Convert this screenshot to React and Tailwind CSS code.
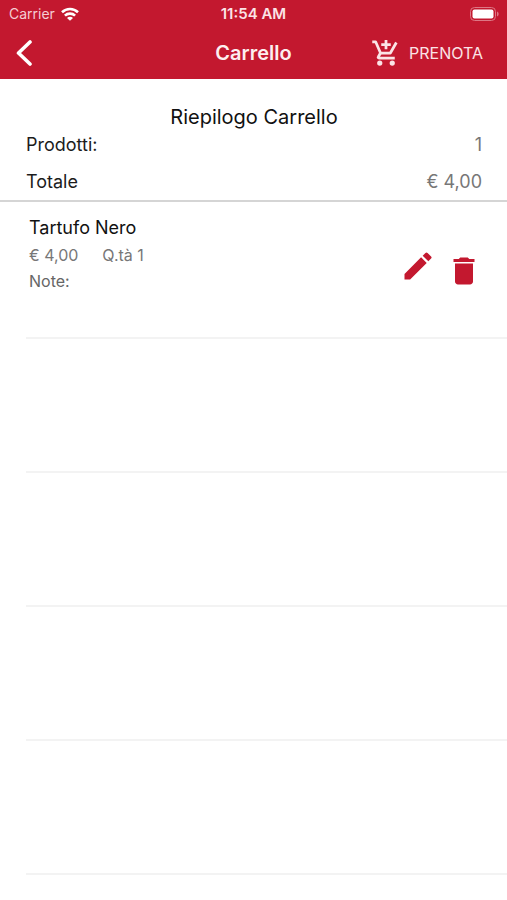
import { MdDelete, MdEdit } from "react-icons/md";

const items = [{ id: 1, name: "Tartufo Nero", price: "€ 4,00", quantity: 1, note: "" }];
const emptyRows = [1, 2, 3, 4];

function StatusBar() {
  return (
    <div className="grid h-7 grid-cols-3 items-center px-2 text-sm">
      <div className="flex items-center gap-[6px] pl-px">
        <span className="text-[#f5cdd3]">Carrier</span>
        <svg className="h-[14px] w-[18px]" viewBox="0 0 18 14" fill="none" stroke="white" strokeWidth="2.6" aria-hidden="true">
          <path d="M1 5.2C5.5.9 12.5.9 17 5.2" />
          <path d="M3.9 8.6C6.7 5.9 11.3 5.9 14.1 8.6" />
          <path d="M9 13.8 6 10.9C7.6 9.4 10.4 9.4 12 10.9Z" fill="white" stroke="none" />
        </svg>
      </div>
      <span className="text-center text-[15px] font-semibold text-[#fbe3e6]">11:54 AM</span>
      <svg className="h-[14px] w-[29px] justify-self-end" viewBox="0 0 29 14" aria-hidden="true">
        <rect x=".5" y=".5" width="25" height="13" rx="4" fill="none" stroke="#dd7785" />
        <rect x="2.5" y="2.5" width="21" height="9" rx="2" fill="white" />
        <path d="M27 4.5C29.2 5.5 29.2 8.5 27 9.5Z" fill="#dd7785" />
      </svg>
    </div>
  );
}

function CartPlusIcon() {
  return (
    <svg className="size-[30px]" viewBox="0 0 24 24" fill="none" stroke="currentColor" strokeWidth="2.2" aria-hidden="true">
      <path d="M12 1.500V9M8.200 5.200H15.800" />
      <path d="M1 3H3.700L7.600 12H15.500L20.300 3.600" strokeLinejoin="round" />
      <path d="M7.600 12 5.800 15.200C5.500 15.700 5.800 16 6.400 16H19" strokeLinejoin="round" />
      <circle cx="7" cy="20" r="2.100" fill="currentColor" stroke="none" />
      <circle cx="17" cy="20" r="2.100" fill="currentColor" stroke="none" />
    </svg>
  );
}

function Header() {
  return (
    <header className="h-[79px] bg-[#c3182f] text-white">
      <StatusBar />
      <div className="grid h-[50px] grid-cols-[1fr_auto_1fr] items-center px-4">
        <button type="button" aria-label="Indietro" className="h-12 w-12">
          <svg className="h-[26px] w-4" viewBox="0 0 16 26" fill="none" stroke="white" strokeWidth="3.6" strokeLinecap="round" strokeLinejoin="round" aria-hidden="true">
            <path d="M14 2 2.5 13 14 24" />
          </svg>
        </button>
        <h1 className="text-xl font-semibold text-[#fdeef0]">Carrello</h1>
        <button type="button" className="flex items-center gap-2 justify-self-end pr-2 text-base text-[#fbe3e6]">
          <CartPlusIcon />
          PRENOTA
        </button>
      </div>
    </header>
  );
}

function Summary() {
  return (
    <section className="border-b-2 border-[#d5d5d5] pt-6 pr-[25px] pb-1 pl-[26px] text-lg leading-7">
      <h2 className="text-center text-xl leading-7 text-[#111111]">Riepilogo Carrello</h2>
      <dl className="flex flex-col gap-[9px]">
        <div className="flex justify-between">
          <dt className="text-[#1c1c1c]">Prodotti:</dt>
          <dd className="text-[#777777]">1</dd>
        </div>
        <div className="flex justify-between">
          <dt className="text-[#1c1c1c]">Totale</dt>
          <dd className="text-[#777777]">€ 4,00</dd>
        </div>
      </dl>
    </section>
  );
}

function CartItem({ item }) {
  return (
    <li className="flex h-[137px] justify-between border-b-2 border-[#f3f3f3] pt-3 pr-[25px] pl-[3px]">
      <div>
        <h3 className="text-lg leading-7 text-[#111111]">{item.name}</h3>
        <p className="flex gap-6 text-base leading-[26px] text-[#777777]">
          <span>{item.price}</span>
          <span>Q.tà {item.quantity}</span>
        </p>
        <p className="text-base leading-[26px] text-[#666666]">Note: {item.note}</p>
      </div>
      <div className="flex items-start gap-[10px] text-[#c3182f]">
        <button type="button" aria-label="Modifica" className="pt-[34px]">
          <MdEdit className="size-9" aria-hidden="true" />
        </button>
        <button type="button" aria-label="Elimina" className="pt-[39px]">
          <MdDelete className="size-9" aria-hidden="true" />
        </button>
      </div>
    </li>
  );
}

export default function App() {
  return (
    <div className="min-h-screen bg-white font-['Inter',sans-serif]">
      <Header />
      <main>
        <Summary />
        <ul className="pl-[26px]">
          {items.map((item) => (
            <CartItem key={item.id} item={item} />
          ))}
          {emptyRows.map((row) => (
            <li key={row} className="h-[134px] border-b-2 border-[#f3f3f3]" aria-hidden="true" />
          ))}
        </ul>
      </main>
    </div>
  );
}
